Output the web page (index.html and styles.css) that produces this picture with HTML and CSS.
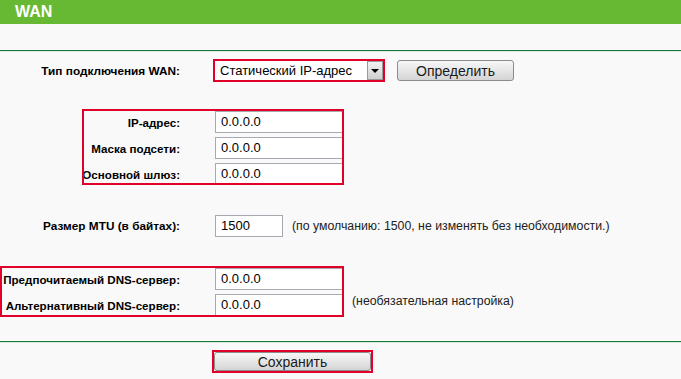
FILE: index.html
```html
<!DOCTYPE html>
<html lang="ru">
<head>
<meta charset="utf-8">
<title>WAN</title>
<link rel="stylesheet" href="styles.css">
</head>
<body>
<div class="header">WAN</div>
<div class="rule"></div>

<div class="row row-type">
  <div class="lbl lbl-main">Тип подключения WAN:</div>
  <div class="select">
    <span class="select-text">Статический IP-адрес</span>
    <span class="select-btn"><span class="tri"></span></span>
  </div>
  <button class="btn btn-detect">Определить</button>
</div>

<div class="group group-ip">
  <div class="grow">
    <div class="lbl lbl-ip">IP-адрес:</div>
    <div class="input input-wide">0.0.0.0</div>
  </div>
  <div class="grow">
    <div class="lbl lbl-ip">Маска подсети:</div>
    <div class="input input-wide">0.0.0.0</div>
  </div>
  <div class="grow">
    <div class="lbl lbl-ip">Основной шлюз:</div>
    <div class="input input-wide">0.0.0.0</div>
  </div>
</div>

<div class="row row-mtu">
  <div class="lbl lbl-main">Размер MTU (в байтах):</div>
  <div class="input input-mtu">1500</div>
  <span class="hint hint-mtu">(по умолчанию: 1500, не изменять без необходимости.)</span>
</div>

<div class="dns-wrap">
  <div class="group group-dns">
    <div class="grow">
      <div class="lbl lbl-dns">Предпочитаемый DNS-сервер:</div>
      <div class="input input-wide">0.0.0.0</div>
    </div>
    <div class="grow">
      <div class="lbl lbl-dns">Альтернативный DNS-сервер:</div>
      <div class="input input-wide">0.0.0.0</div>
    </div>
  </div>
  <span class="hint hint-dns">(необязательная настройка)</span>
</div>

<div class="rule rule-bottom"></div>

<div class="save-wrap">
  <button class="btn btn-save">Сохранить</button>
</div>
</body>
</html>
```

FILE: styles.css
```css
html, body {
  margin: 0;
  padding: 0;
}
body {
  background: #f9f9f9;
  font-family: "Liberation Sans", Arial, sans-serif;
  font-size: 12px;
  color: #000;
  width: 681px;
  height: 379px;
  overflow: hidden;
}
.header {
  height: 24px;
  background: #67b934;
  color: #fff;
  font-weight: bold;
  font-size: 16px;
  line-height: 24px;
  padding-left: 15px;
}
.rule {
  margin-top: 26px;
  height: 1px;
  background: #137a3a;
  border-bottom: 1px solid #dfeadf;
}
.rule-bottom {
  margin-top: 24px;
}
.row {
  display: flex;
  align-items: center;
}
.lbl {
  display: flex;
  justify-content: flex-end;
  white-space: nowrap;
  font-weight: bold;
  font-size: 11.8px;
  flex-shrink: 0;
}
.lbl-main {
  width: 180px;
  margin-right: 33px;
}
.row-type {
  margin-top: 7px;
  height: 23px;
}
.select {
  box-sizing: border-box;
  width: 172px;
  height: 23px;
  border: 2px solid #e0002a;
  background: #fff;
  display: flex;
  align-items: center;
  justify-content: space-between;
}
.select-text {
  font-size: 13px;
  padding-left: 5px;
  white-space: nowrap;
}
.select-btn {
  box-sizing: border-box;
  width: 16px;
  height: 19px;
  background: linear-gradient(#f2f2f2, #cfcfcf);
  border: 1px solid #9a9a9a;
  display: flex;
  align-items: center;
  justify-content: center;
}
.tri {
  width: 0;
  height: 0;
  border-left: 4px solid transparent;
  border-right: 4px solid transparent;
  border-top: 4px solid #000;
}
.btn {
  font-family: "Liberation Sans", Arial, sans-serif;
  font-size: 14px;
  color: #1a1a1a;
  background: linear-gradient(#f7f7f7, #e6e6e6 50%, #d4d4d4);
  border: 1px solid #8c8c8c;
  border-radius: 3px;
  padding: 0;
  line-height: 1;
}
.btn-detect {
  margin-left: 12px;
  width: 117px;
  height: 21px;
}
.group {
  box-sizing: border-box;
  border: 2px solid #e0002a;
  overflow: hidden;
}
.group-ip {
  margin-top: 27px;
  margin-left: 82px;
  width: 262px;
  height: 76px;
}
.grow {
  display: flex;
  align-items: center;
  height: 22px;
  margin-bottom: 4px;
}
.lbl-ip {
  width: 96px;
  margin-right: 35px;
  font-size: 11.6px;
}
.input {
  box-sizing: border-box;
  flex-shrink: 0;
  height: 22px;
  background: #fff;
  border: 1px solid #a8a8b0;
  font-size: 13px;
  line-height: 20px;
  padding-left: 5px;
  color: #000;
}
.input-wide {
  width: 134px;
}
.row-mtu {
  margin-top: 30px;
  height: 22px;
}
.row-mtu .lbl-main {
  margin-right: 35px;
}
.input-mtu {
  width: 68px;
}
.hint {
  font-size: 12.3px;
  color: #222;
  white-space: nowrap;
}
.hint-mtu {
  margin-left: 9px;
}
.dns-wrap {
  margin-top: 29px;
  display: flex;
  align-items: flex-end;
}
.group-dns {
  width: 344px;
  height: 51px;
}
.lbl-dns {
  width: 178px;
  margin-right: 35px;
  font-size: 11.6px;
}
.hint-dns {
  margin-left: 8px;
  margin-bottom: 9px;
}
.save-wrap {
  margin-top: 7px;
  margin-left: 212px;
  width: 161px;
  box-sizing: border-box;
  border: 2px solid #e0002a;
  display: flex;
}
.btn-save {
  width: 157px;
  height: 19px;
}
```
